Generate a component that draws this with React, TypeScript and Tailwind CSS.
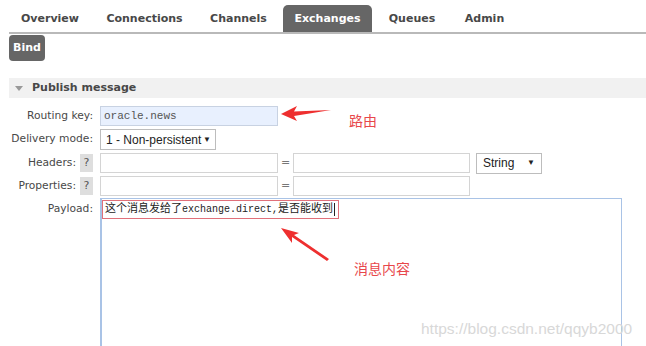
import React from "react";

const tabs = [
  { name: "Overview", w: "w-[82px]" },
  { name: "Connections", w: "w-[99px]" },
  { name: "Channels", w: "w-[81px]" },
  { name: "Exchanges", w: "w-[89px]", active: true },
  { name: "Queues", w: "w-[72px]" },
  { name: "Admin", w: "w-[65px]" },
];

function Help() {
  return (
    <span className="flex h-[18px] w-[13px] shrink-0 items-center justify-center bg-[#dedede] text-[11px] text-[#555]">
      ?
    </span>
  );
}

function Label({ text, help }: { text: string; help?: boolean }) {
  return (
    <div className="mr-[7px] flex w-[84px] shrink-0 items-center justify-end gap-[4px] whitespace-nowrap text-[10.7px] text-[#484848]">
      <span>{text}</span>
      {help && <Help />}
    </div>
  );
}

function Box({ w }: { w: string }) {
  return <div className={`h-[20px] ${w} border border-[#d4d4d4] bg-white`} />;
}

export default function App() {
  return (
    <div
      className="relative h-[346px] w-[646px] overflow-hidden bg-white pl-[9px]"
      style={{ fontFamily: '"DejaVu Sans", Verdana, sans-serif' }}
    >
      {/* tabs */}
      <div className="flex h-[34px] items-end gap-[4px] border-b-2 border-[#b9b9b9] pt-[5px]">
        {tabs.map((t) => (
          <div
            key={t.name}
            className={`flex h-[27px] ${t.w} items-center justify-center rounded-t-[5px] pt-[2px] text-[11px] font-bold ${
              t.active ? "bg-[#666] text-white" : "text-[#484848]"
            }`}
          >
            {t.name}
          </div>
        ))}
      </div>

      <div className="mt-[1px] flex h-[26px] w-[36px] items-center justify-center rounded-[4px] bg-[#666] text-[11px] font-bold text-white">
        Bind
      </div>

      {/* section header */}
      <div className="mt-[17px] flex h-[20px] items-center bg-[#f1f1f1] text-[11px] font-bold text-[#484848]">
        <span className="ml-[6px] mr-[9px] h-0 w-0 border-x-[4px] border-t-[5px] border-x-transparent border-t-[#999]" />
        Publish message
      </div>

      {/* form */}
      <div className="mt-[8px] flex flex-col">
        <div className="flex h-[20px] items-center">
          <Label text="Routing key:" />
          <div
            className="flex h-[20px] w-[178px] items-center border border-[#c8d2e2] bg-[#e8f0fe] pl-[3px] text-[11px] text-[#555]"
            style={{ fontFamily: '"Liberation Mono", monospace' }}
          >
            oracle.news
          </div>
        </div>

        <div className="mt-[3px] flex h-[21px] items-center">
          <Label text="Delivery mode:" />
          <div
            className="flex h-[21px] w-[116px] items-center justify-between border border-[#bdbdbd] bg-white pl-[5px] pr-[4px] text-[12px] text-[#222]"
            style={{ fontFamily: '"Liberation Sans", Arial, sans-serif' }}
          >
            <span>1 - Non-persistent</span>
            <span className="text-[8px]">▼</span>
          </div>
        </div>

        <div className="mt-[3px] flex h-[20px] items-center">
          <Label text="Headers:" help />
          <Box w="w-[178px]" />
          <span className="w-[15px] text-center text-[11px] text-[#777]">=</span>
          <Box w="w-[177px]" />
          <div
            className="ml-[6px] flex h-[21px] w-[66px] items-center justify-between border border-[#bdbdbd] bg-white pl-[6px] pr-[6px] text-[12px] text-[#222]"
            style={{ fontFamily: '"Liberation Sans", Arial, sans-serif' }}
          >
            <span>String</span>
            <span className="text-[8px]">▼</span>
          </div>
        </div>

        <div className="mt-[3px] flex h-[20px] items-center">
          <Label text="Properties:" help />
          <Box w="w-[178px]" />
          <span className="w-[15px] text-center text-[11px] text-[#777]">=</span>
          <Box w="w-[177px]" />
        </div>

        <div className="mt-[2px] flex">
          <div className="mr-[7px] flex w-[84px] shrink-0 justify-end pt-[3px] text-[10.7px] text-[#484848]">
            Payload:
          </div>
          <div className="flex h-[160px] w-[522px] items-start border border-l-2 border-[#a9c3e6] bg-white pt-[1px]">
            <div
              className="flex h-[19px] items-center border border-[#e0707a] pl-[2px] pr-[3px] text-[11px] leading-none text-[#222]"
              style={{ fontFamily: '"Liberation Mono", "Noto Sans CJK SC", monospace' }}
            >
              这个消息发给了<span className="text-[10px]">exchange.direct,</span>是否能收到
              <span className="ml-[1px] inline-block h-[13px] w-px bg-[#222]" />
            </div>
          </div>
        </div>
      </div>

      {/* annotations */}
      <svg className="absolute left-0 top-0" width="646" height="346">
        <polygon points="281,114 297,106 294,111.5 331,110 294,116 297,121" fill="#ee2f2f" />
        <polygon points="281,228 299,233 294,235 329,259 327,261 292,237 292,243" fill="#ee2f2f" />
      </svg>
      <div
        className="absolute left-[349px] top-[110px] text-[14px] text-[#e8474b]"
        style={{ fontFamily: '"Noto Sans CJK SC", sans-serif' }}
      >
        路由
      </div>
      <div
        className="absolute left-[354px] top-[258px] text-[14px] text-[#e8474b]"
        style={{ fontFamily: '"Noto Sans CJK SC", sans-serif' }}
      >
        消息内容
      </div>
      <div
        className="absolute left-[421px] top-[317px] text-[15.5px] text-[#d8d8d8]"
        style={{ fontFamily: '"Liberation Sans", Arial, sans-serif' }}
      >
        https://blog.csdn.net/qqyb2000
      </div>
    </div>
  );
}
